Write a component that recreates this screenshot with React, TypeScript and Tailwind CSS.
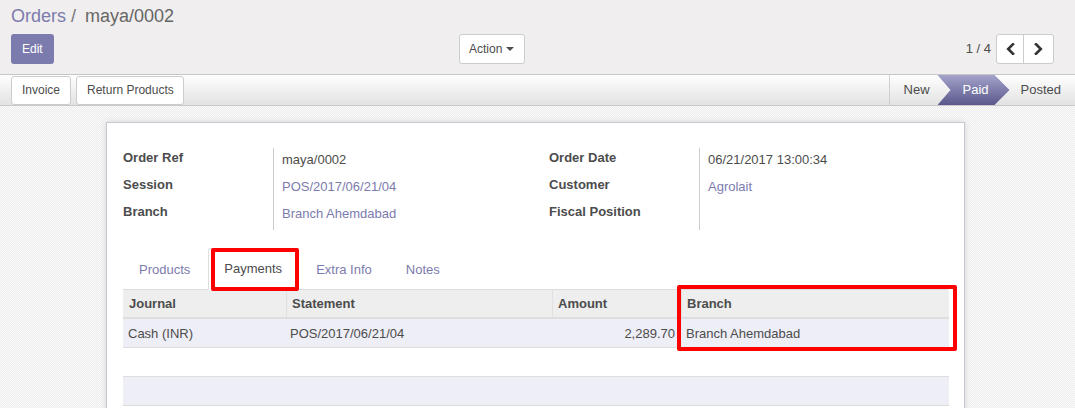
import React from "react";

function ChevronLeft() {
  return (
    <svg width="9" height="12" viewBox="0 0 9 12">
      <path d="M7 1.2 L2.2 6 L7 10.8" fill="none" stroke="#333" strokeWidth="2.6" strokeLinecap="square" />
    </svg>
  );
}
function ChevronRight() {
  return (
    <svg width="9" height="12" viewBox="0 0 9 12">
      <path d="M2 1.2 L6.8 6 L2 10.8" fill="none" stroke="#333" strokeWidth="2.6" strokeLinecap="square" />
    </svg>
  );
}

export default function App() {
  return (
    <div className="relative w-[1075px] h-[408px] overflow-hidden font-['Liberation_Sans',Arial,sans-serif] text-[13px] text-[#4c4c4c]">
      {/* Control panel */}
      <div className="h-[75px] bg-[#f0eeee] border-b border-[#c6c6c6] px-[11px]">
        <div className="pt-[6px] h-[26px] leading-[20px] text-[18px] flex">
          <span className="text-[#7c7bad]">Orders</span>
          <span className="text-[#777] ml-[5px]">/</span>
          <span className="text-[#666] ml-[9px]">maya/0002</span>
        </div>
        <div className="mt-[8px] flex items-center">
          <button className="h-[30px] px-[11px] rounded-[3px] bg-[#7c7bad] text-white text-[12px]">Edit</button>
          <button className="ml-[405px] h-[30px] w-[66px] rounded-[3px] bg-white border border-[#ccc] text-[12px] text-[#4c4c4c] flex items-center justify-center gap-[4px]">
            <span>Action</span>
            <span className="inline-block w-0 h-0 border-l-[4px] border-r-[4px] border-t-[4px] border-l-transparent border-r-transparent border-t-[#4c4c4c]"></span>
          </button>
          <div className="ml-auto flex items-center">
            <span className="text-[13px] mr-[5px]">1 / 4</span>
            <div className="flex h-[30px] border border-[#ccc] rounded-[3px] bg-white">
              <div className="w-[27px] flex items-center justify-center border-r border-[#ccc]"><ChevronLeft /></div>
              <div className="w-[29px] flex items-center justify-center"><ChevronRight /></div>
            </div>
          </div>
          <div className="w-[10px]"></div>
        </div>
      </div>

      {/* Statusbar */}
      <div className="h-[31px] border-b border-[#c9c9c9] bg-linear-to-b from-white to-[#e2e2e2] flex items-stretch pl-[11px]">
        <div className="flex items-center gap-[5px]">
          <button className="h-[29px] px-[10px] bg-white border border-[#ccc] rounded-[3px] text-[12px] text-[#4c4c4c]">Invoice</button>
          <button className="h-[29px] pl-[10px] pr-[9px] bg-white border border-[#ccc] rounded-[3px] text-[12px] text-[#4c4c4c]">Return Products</button>
        </div>
        <div className="ml-auto flex items-stretch border-l border-[#d0d0d0]">
          <div className="w-[48px] pl-[14px] flex items-center">New</div>
          <div className="w-[72px] pl-[4px] flex items-center justify-center text-white bg-linear-to-b from-[#a4a3cb] to-[#5b598c] [clip-path:polygon(0_0,57px_0,72px_50%,57px_100%,0_100%,13px_50%)]">Paid</div>
          <div className="pl-[11px] pr-[14px] flex items-center">Posted</div>
        </div>
      </div>

      {/* Sheet background */}
      <div className="h-[302px] pt-[16px] bg-[image:repeating-conic-gradient(#ececec_0%_25%,#fbfbfb_0%_50%)] bg-[length:2px_2px]">
        <div className="ml-[106px] w-[859px] h-[400px] bg-white border border-[#c7c7d1] shadow-[0_0_6px_rgba(0,0,0,0.12)] px-[16px] pt-[25px]">
          {/* Groups */}
          <div className="flex">
            <div className="w-[413px] flex">
              <div className="w-[150px] font-bold">
                <div className="h-[27px] pt-[2px] leading-[15px]">Order Ref</div>
                <div className="h-[27px] pt-[2px] leading-[15px]">Session</div>
                <div className="h-[27px] pt-[2px] leading-[15px]">Branch</div>
              </div>
              <div className="border-l border-[#ccc] pl-[8px] h-[82px]">
                <div className="h-[27px] pt-[4px] leading-[15px]">maya/0002</div>
                <div className="h-[27px] pt-[4px] leading-[15px] text-[#7c7bad]">POS/2017/06/21/04</div>
                <div className="h-[27px] pt-[4px] leading-[15px] text-[#7c7bad]">Branch Ahemdabad</div>
              </div>
            </div>
            <div className="pl-[13px] flex">
              <div className="w-[150px] font-bold">
                <div className="h-[27px] pt-[2px] leading-[15px]">Order Date</div>
                <div className="h-[27px] pt-[2px] leading-[15px]">Customer</div>
                <div className="h-[27px] pt-[2px] leading-[15px]">Fiscal Position</div>
              </div>
              <div className="border-l border-[#ccc] pl-[8px] h-[82px]">
                <div className="h-[27px] pt-[4px] leading-[15px]">06/21/2017 13:00:34</div>
                <div className="h-[27px] pt-[4px] leading-[15px] text-[#7c7bad]">Agrolait</div>
                <div className="h-[27px] pt-[4px] leading-[15px]"></div>
              </div>
            </div>
          </div>

          {/* Tabs */}
          <div className="mt-[18px] flex border-b border-[#ddd] h-[42px]">
            <div className="px-[15px] pt-[12px] leading-[18px] text-[#7c7bad] border border-transparent">Products</div>
            <div className="ml-[2px] px-[15px] pt-[11px] leading-[18px] text-[#4c4c4c] bg-white border border-[#ddd] border-b-white -mb-[1px] rounded-t-[3px]">Payments</div>
            <div className="ml-[2px] px-[15px] pt-[12px] leading-[18px] text-[#7c7bad] border border-transparent">Extra Info</div>
            <div className="ml-[2px] px-[15px] pt-[12px] leading-[18px] text-[#7c7bad] border border-transparent">Notes</div>
          </div>

          {/* Table */}
          <div className="grid grid-cols-[163px_266px_129px_268px]">
            <div className="h-[29px] bg-[#eeeeee] font-bold pl-[6px] flex items-center border-b-2 border-[#dddddd]">Journal</div>
            <div className="h-[29px] bg-[#eeeeee] font-bold pl-[5px] flex items-center border-b-2 border-[#dddddd] border-l border-l-[#e0e0e0]">Statement</div>
            <div className="h-[29px] bg-[#eeeeee] font-bold pl-[5px] flex items-center border-b-2 border-[#dddddd] border-l border-l-[#e0e0e0]">Amount</div>
            <div className="h-[29px] bg-[#eeeeee] font-bold pl-[5px] flex items-center border-b-2 border-[#dddddd] border-l border-l-[#e0e0e0]">Branch</div>

            <div className="h-[29px] bg-[#eeeef6] pl-[5px] flex items-center border-b border-[#dddddd] pt-[1px]">Cash (INR)</div>
            <div className="h-[29px] bg-[#eeeef6] pl-[4px] flex items-center border-b border-[#dddddd] pt-[1px]">POS/2017/06/21/04</div>
            <div className="h-[29px] bg-[#eeeef6] pr-[6px] flex items-center justify-end border-b border-[#dddddd] pt-[1px]">2,289.70</div>
            <div className="h-[29px] bg-[#eeeef6] pl-[5px] flex items-center border-b border-[#dddddd] pt-[1px]">Branch Ahemdabad</div>

            <div className="col-span-4 h-[29px] bg-white border-b border-[#dddddd]"></div>
            <div className="col-span-4 h-[29px] bg-[#eeeef6] border-b border-[#dddddd]"></div>
          </div>
        </div>
      </div>

      {/* Annotation boxes */}
      <div className="absolute left-[211px] top-[248px] w-[88px] h-[43px] border-[4px] border-[#ff0000] rounded-[2px]"></div>
      <div className="absolute left-[677px] top-[285px] w-[280px] h-[66px] border-[4px] border-[#ff0000] rounded-[2px]"></div>
    </div>
  );
}
